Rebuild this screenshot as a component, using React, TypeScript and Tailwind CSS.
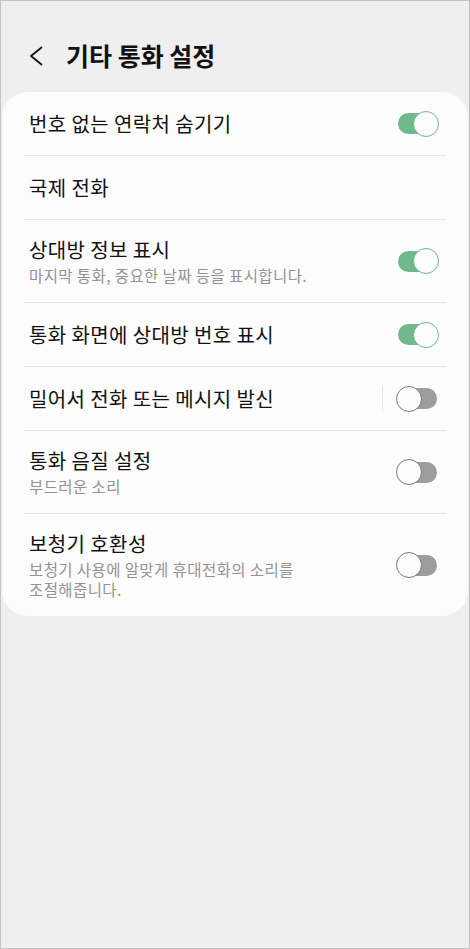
import React from "react"

const FONT = { fontFamily: '"Noto Sans CJK KR", "Noto Sans", sans-serif' }

type Row = {
  title: string
  sub?: string
  toggle?: boolean
  on?: boolean
  sep?: boolean
}

const ROWS: Row[] = [
  { title: "번호 없는 연락처 숨기기", toggle: true, on: true },
  { title: "국제 전화" },
  { title: "상대방 정보 표시", sub: "마지막 통화, 중요한 날짜 등을 표시합니다.", toggle: true, on: true },
  { title: "통화 화면에 상대방 번호 표시", toggle: true, on: true },
  { title: "밀어서 전화 또는 메시지 발신", toggle: true, on: false, sep: true },
  { title: "통화 음질 설정", sub: "부드러운 소리", toggle: true, on: false },
  { title: "보청기 호환성", sub: "보청기 사용에 알맞게 휴대전화의 소리를 조절해줍니다.", toggle: true, on: false },
]

function Toggle({ on }: { on: boolean }) {
  return (
    <div className="relative w-[43px] h-[26px] shrink-0">
      <div className={`absolute left-[2px] right-[2px] top-[2.5px] h-[21px] rounded-full ${on ? "bg-[#70b98c]" : "bg-[#9d9d9d]"}`} />
      <div
        className={`absolute top-0 w-[26px] h-[26px] rounded-full bg-[#fcfcfc] border-[1.5px] ${
          on ? "right-0 border-[#70b98c]" : "left-0 border-[#7a7a7a]"
        }`}
      />
    </div>
  )
}

function SettingRow({ r }: { r: Row }) {
  const single = !r.sub
  return (
    <div className={`flex items-center pl-[27px] pr-[29px] ${single ? "h-[63px]" : "pt-[17px] pb-[17px]"}`}>
      <div className="flex-1 min-w-0">
        <p className="text-[20px] leading-[25px] tracking-[0.4px] text-[#111]">{r.title}</p>
        {r.sub && (
          <p className="mt-[3px] text-[15.5px] leading-[20px] tracking-[0.4px] text-[#939393] max-w-[300px] break-keep">
            {r.sub}
          </p>
        )}
      </div>
      {r.sep && <div className="w-px h-[25px] bg-[#e6e6e6] mr-[13px]" />}
      {r.toggle && <Toggle on={!!r.on} />}
    </div>
  )
}

export default function App() {
  return (
    <div className="w-[470px] h-[949px] bg-[#efefef] border border-[#c4c4c4] overflow-hidden" style={FONT}>
      <div className="h-[91px] flex items-center pl-[28px] pt-[18px]">
        <svg width="14" height="20" viewBox="0 0 14 20" className="mr-[23px]">
          <path d="M12.5 1.5 L2 10 L12.5 18.5" fill="none" stroke="#111" strokeWidth="1.8" strokeLinecap="round" strokeLinejoin="round" />
        </svg>
        <h1 className="text-[25px] font-bold text-[#111]">기타 통화 설정</h1>
      </div>
      <div className="mx-[1px] rounded-[26px] bg-[#fcfcfc]">
        {ROWS.map((r, i) => (
          <div key={r.title}>
            {i > 0 && <div className="mx-[22px] h-px bg-[#e8e8e8]" />}
            <SettingRow r={r} />
          </div>
        ))}
      </div>
    </div>
  )
}
